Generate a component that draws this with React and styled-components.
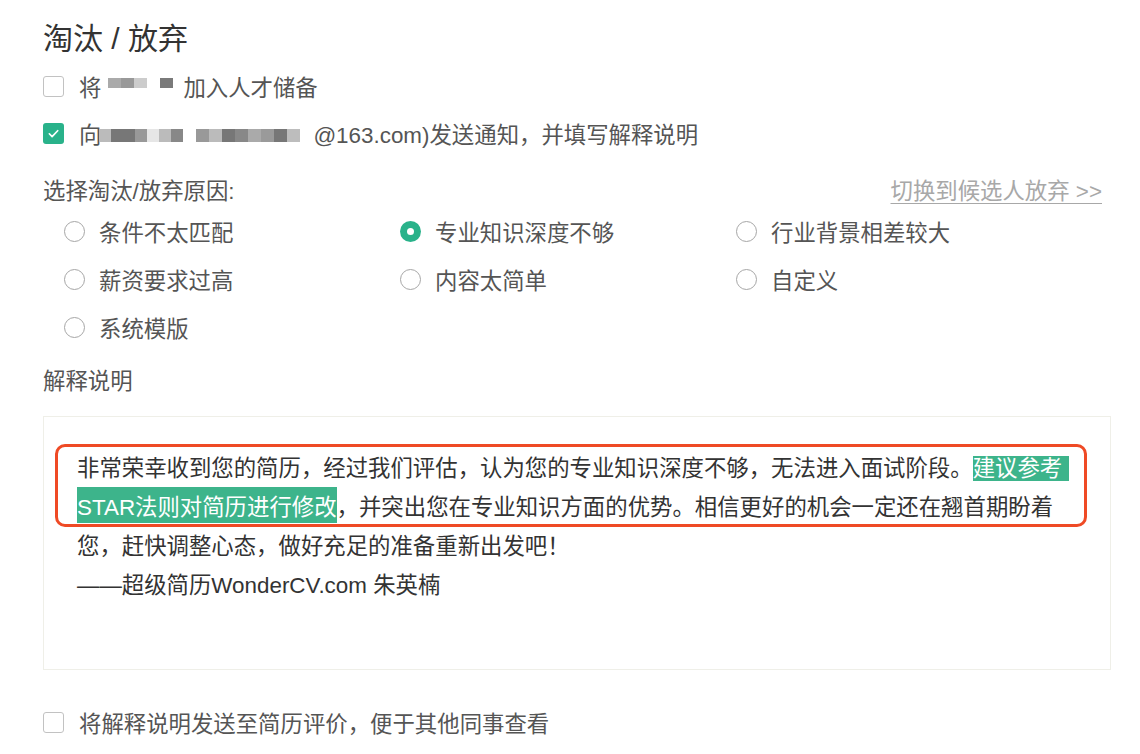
import React from 'react';
import styled, { createGlobalStyle } from 'styled-components';

const GlobalStyle = createGlobalStyle`
  html, body {
    margin: 0;
    padding: 0;
    background: #fff;
  }
  body {
    font-family: "Liberation Sans", "Noto Sans CJK SC", sans-serif;
    color: #333;
  }
`;

const GREEN = '#29b28a';

const Page = styled.div`
  width: 1140px;
  height: 754px;
  box-sizing: border-box;
  padding: 19px 29px 0 43px;
  overflow: hidden;
`;

const Title = styled.h2`
  margin: 0;
  font-size: 30px;
  line-height: 40px;
  font-weight: 400;
  color: #333;
`;

const CheckRow = styled.label`
  display: flex;
  align-items: center;
  height: 30px;
  margin-top: ${(p) => p.$gap}px;
  font-size: 22.4px;
  color: #555;
`;

const CheckBox = styled.span`
  flex: none;
  width: 21px;
  height: 21px;
  box-sizing: border-box;
  border-radius: 3px;
  border: ${(p) => (p.$checked ? 'none' : '1.5px solid #c2c2c2')};
  background: ${(p) => (p.$checked ? GREEN : '#fff')};
  display: flex;
  align-items: center;
  justify-content: center;
  margin-right: 15px;
`;

const LabelText = styled.span`
  display: flex;
  align-items: center;
  white-space: nowrap;
`;

const Mosaic = styled.span`
  display: flex;
  margin: ${(p) => p.$margin || '0'};
  transform: translateY(${(p) => p.$shift || 0}px);
`;

const Pixel = styled.span`
  width: ${(p) => p.$w || 12}px;
  height: ${(p) => p.$h}px;
  background: ${(p) => p.$shade};
`;

const ReasonHeader = styled.div`
  display: flex;
  align-items: center;
  justify-content: space-between;
  height: 30px;
  margin-top: 26px;
  font-size: 22.4px;
  color: #555;
`;

const SwitchLink = styled.a`
  color: #a8a8a8;
  text-decoration: underline;
  text-underline-offset: 4px;
  text-decoration-thickness: 1px;
  margin-right: 9px;
  cursor: pointer;
`;

const RadioGrid = styled.div`
  display: grid;
  grid-template-columns: repeat(3, 336px);
  row-gap: 18px;
  margin-top: 12px;
  padding-left: 21px;
`;

const RadioItem = styled.label`
  display: flex;
  align-items: center;
  height: 30px;
  font-size: 22.4px;
  color: #555;
  white-space: nowrap;
`;

const RadioDot = styled.span`
  flex: none;
  width: 21px;
  height: 21px;
  box-sizing: border-box;
  border-radius: 50%;
  margin-right: 14px;
  border: ${(p) => (p.$checked ? 'none' : '1.5px solid #a6a6a6')};
  background: ${(p) => (p.$checked ? GREEN : '#fff')};
  display: flex;
  align-items: center;
  justify-content: center;

  &::after {
    content: '';
    display: ${(p) => (p.$checked ? 'block' : 'none')};
    width: 7px;
    height: 7px;
    border-radius: 50%;
    background: #fff;
  }
`;

const SectionLabel = styled.div`
  height: 30px;
  line-height: 30px;
  margin-top: 25px;
  font-size: 22.4px;
  color: #555;
`;

const Editor = styled.div`
  margin-top: 19px;
  height: 254px;
  box-sizing: border-box;
  border: 1px solid #efefe8;
  padding: 32px 33px 0 33px;
  font-size: 22.4px;
  color: #333;
`;

const Line = styled.div`
  line-height: 39px;
  white-space: nowrap;
`;

const Marked = styled.div`
  position: relative;

  &::after {
    content: '';
    position: absolute;
    top: -5px;
    left: -22px;
    right: -10px;
    bottom: 0;
    border: 3px solid #ef4a25;
    border-radius: 10px;
    pointer-events: none;
  }
`;

const Selected = styled.span`
  background: #3db48b;
  color: #fff;
  padding: ${(p) => (p.$tall ? '8px 0 3px' : '0 7px 0 0')};
`;

const Check = () => (
  <svg width="13" height="13" viewBox="0 0 14 14" fill="none">
    <path d="M2.5 7.3l3 3 6-6.3" stroke="#fff" strokeWidth="1.8" strokeLinecap="round" strokeLinejoin="round" />
  </svg>
);

const reasons = [
  { text: '条件不太匹配' },
  { text: '专业知识深度不够', checked: true },
  { text: '行业背景相差较大' },
  { text: '薪资要求过高' },
  { text: '内容太简单' },
  { text: '自定义' },
  { text: '系统模版' },
];

const nameBlocks = ['#aaa', '#999', '#ccc'];
const mailBlocksA = ['#bbb', '#777', '#777', '#999', '#e6e6e6', '#bbb', '#888'];
const mailBlocksB = ['#999', '#bbb', '#777', '#888', '#aaa', '#9a9a9a', '#777', '#bdbdbd'];

export default function App() {
  return (
    <Page>
      <GlobalStyle />
      <Title>淘汰 / 放弃</Title>

      <CheckRow $gap={12}>
        <CheckBox />
        <LabelText>
          将
          <Mosaic $margin="0 0 0 7px" $shift={-3}>
            {nameBlocks.map((c, i) => (
              <Pixel key={i} $shade={c} $w={13} $h={10} />
            ))}
          </Mosaic>
          <Mosaic $margin="0 10px 0 13px" $shift={-3}>
            <Pixel $shade="#7a7a7a" $w={13} $h={10} />
          </Mosaic>
          加入人才储备
        </LabelText>
      </CheckRow>

      <CheckRow $gap={17}>
        <CheckBox $checked>
          <Check />
        </CheckBox>
        <LabelText>
          向
          <Mosaic $margin="0 0 0 -2px" $shift={2}>
            {mailBlocksA.map((c, i) => (
              <Pixel key={i} $shade={c} $w={12} $h={13} />
            ))}
          </Mosaic>
          <Mosaic $margin="0 13px 0 13px" $shift={2}>
            {mailBlocksB.map((c, i) => (
              <Pixel key={i} $shade={c} $w={13} $h={13} />
            ))}
          </Mosaic>
          @163.com)发送通知，并填写解释说明
        </LabelText>
      </CheckRow>

      <ReasonHeader>
        <span>选择淘汰/放弃原因:</span>
        <SwitchLink>切换到候选人放弃 &gt;&gt;</SwitchLink>
      </ReasonHeader>

      <RadioGrid>
        {reasons.map((r) => (
          <RadioItem key={r.text}>
            <RadioDot $checked={r.checked} />
            {r.text}
          </RadioItem>
        ))}
      </RadioGrid>

      <SectionLabel>解释说明</SectionLabel>

      <Editor>
        <Marked>
          <Line>
            非常荣幸收到您的简历，经过我们评估，认为您的专业知识深度不够，无法进入面试阶段。<Selected>建议参考</Selected>
          </Line>
          <Line>
            <Selected $tall>STAR法则对简历进行修改</Selected>，并突出您在专业知识方面的优势。相信更好的机会一定还在翘首期盼着
          </Line>
        </Marked>
        <Line>您，赶快调整心态，做好充足的准备重新出发吧！</Line>
        <Line>——超级简历WonderCV.com 朱英楠</Line>
      </Editor>

      <CheckRow $gap={37}>
        <CheckBox />
        <LabelText>将解释说明发送至简历评价，便于其他同事查看</LabelText>
      </CheckRow>
    </Page>
  );
}
